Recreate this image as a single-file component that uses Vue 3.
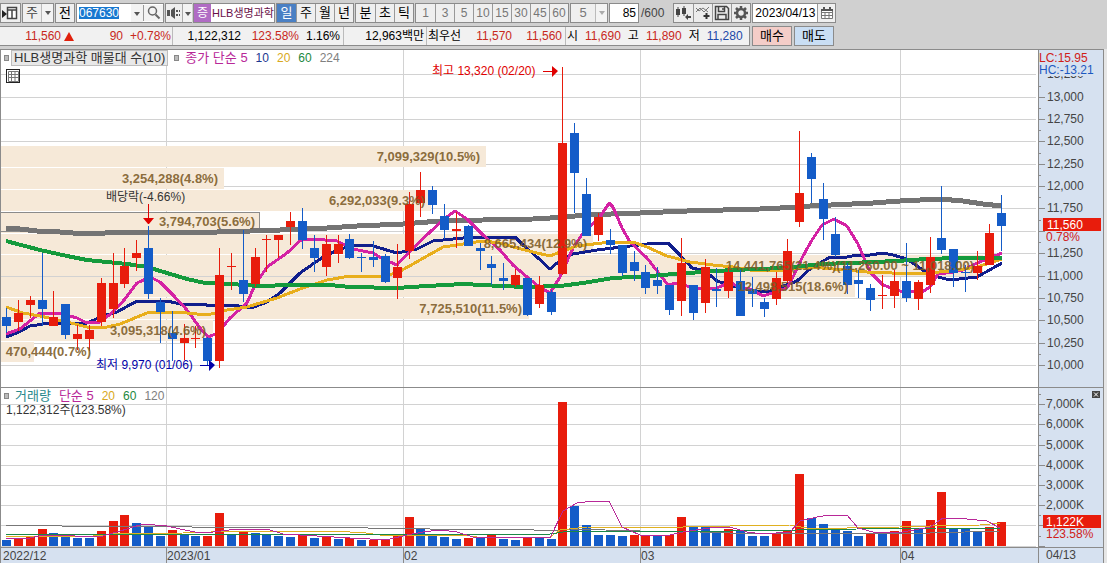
<script setup>
import { computed, onBeforeUnmount, onMounted, ref } from 'vue'

const BASE_WIDTH = 1037
const plot = ref(null)
const width = ref(BASE_WIDTH)
let observer
const measure = () => { if (plot.value) width.value = plot.value.clientWidth || BASE_WIDTH }
onMounted(() => {
  measure()
  observer = new ResizeObserver(measure)
  observer.observe(plot.value)
})
onBeforeUnmount(() => observer && observer.disconnect())

const k = computed(() => width.value / BASE_WIDTH)
const sx = (v) => v * k.value
const line = (pts) => pts.map(([x, y]) => `${sx(x)},${y}`).join(' ')

const periods = ['일', '주', '월', '년']
const units = ['분', '초', '틱']
const steps = ['1', '3', '5', '10', '15', '30', '45', '60']

// kind, high, body top, body bottom, low, volume kind, volume top
const rows = [
  ['d', 308, 317, 326, 333, 'd', 540], ['u', 300, 313, 322, 331, 'u', 539], ['u', 296, 300, 305, 318, 'u', 537],
  ['d', 253, 300, 309, 326, 'u', 529], ['u', 291, 317, 326, 326, 'd', 533], ['d', 304, 304, 335, 339, 'd', 535],
  ['u', 325, 334, 339, 350, 'd', 538], ['u', 325, 330, 339, 351, 'd', 538], ['u', 278, 283, 322, 326, 'u', 531],
  ['u', 253, 283, 309, 318, 'u', 521], ['u', 248, 266, 284, 288, 'u', 515], ['u', 240, 253, 258, 271, 'd', 523],
  ['d', 226, 248, 294, 299, 'd', 527], ['d', 298, 302, 312, 343, 'd', 536], ['d', 311, 333, 339, 361, 'u', 530],
  ['u', 324, 338, 343, 360, 'd', 534], ['u', 326, 338, 339, 348, 'd', 536], ['d', 337, 338, 361, 365, 'u', 536],
  ['u', 248, 275, 361, 368, 'u', 513], ['u', 253, 266, 267, 290, 'd', 534], ['d', 230, 280, 294, 302, 'u', 531],
  ['u', 248, 257, 284, 287, 'd', 533], ['u', 235, 239, 240, 272, 'd', 534], ['u', 235, 235, 240, 258, 'd', 536],
  ['u', 212, 221, 227, 245, 'd', 537], ['d', 208, 221, 240, 249, 'u', 535], ['d', 235, 248, 258, 272, 'd', 538],
  ['u', 235, 244, 267, 276, 'u', 537], ['u', 235, 244, 254, 263, 'd', 539], ['d', 234, 239, 258, 259, 'u', 538],
  ['d', 253, 257, 258, 272, 'd', 540], ['d', 241, 257, 260, 267, 'u', 540], ['d', 254, 256, 282, 283, 'u', 540],
  ['u', 244, 267, 278, 299, 'u', 536], ['u', 192, 204, 251, 259, 'u', 517], ['u', 172, 190, 203, 217, 'd', 529],
  ['d', 186, 190, 205, 214, 'd', 534], ['d', 204, 216, 230, 239, 'd', 537], ['u', 212, 229, 231, 248, 'd', 539],
  ['d', 225, 226, 246, 246, 'u', 538], ['d', 243, 248, 251, 270, 'd', 538], ['d', 256, 264, 268, 285, 'u', 535],
  ['d', 263, 278, 281, 290, 'd', 539], ['u', 269, 275, 285, 287, 'd', 540], ['d', 278, 278, 315, 316, 'u', 538],
  ['u', 276, 285, 304, 308, 'd', 538], ['d', 290, 292, 312, 315, 'd', 539], ['u', 67, 143, 274, 275, 'u', 402],
  ['d', 123, 133, 173, 213, 'd', 506], ['d', 178, 194, 236, 236, 'd', 525], ['u', 213, 217, 235, 241, 'd', 535],
  ['d', 229, 240, 245, 254, 'd', 535], ['d', 245, 245, 273, 276, 'd', 536], ['d', 251, 262, 271, 281, 'u', 535],
  ['d', 265, 272, 288, 294, 'u', 535], ['d', 267, 280, 286, 294, 'd', 535], ['d', 285, 285, 310, 315, 'u', 535],
  ['u', 238, 263, 301, 316, 'u', 517], ['d', 285, 285, 313, 320, 'd', 527], ['u', 259, 267, 303, 313, 'd', 527],
  ['d', 268, 289, 291, 307, 'd', 531], ['u', 267, 272, 291, 298, 'u', 529], ['d', 270, 281, 316, 316, 'd', 531],
  ['d', 277, 289, 294, 307, 'd', 536], ['d', 298, 302, 309, 317, 'd', 536], ['u', 272, 278, 299, 305, 'u', 533],
  ['u', 239, 251, 281, 283, 'u', 531], ['u', 131, 193, 222, 227, 'u', 474], ['d', 153, 157, 179, 203, 'd', 518],
  ['d', 183, 199, 219, 240, 'd', 524], ['d', 217, 234, 255, 257, 'd', 528], ['d', 263, 266, 285, 294, 'd', 531],
  ['d', 270, 280, 284, 298, 'd', 536], ['d', 284, 288, 300, 311, 'u', 533], ['u', 275, 295, 296, 309, 'd', 533],
  ['u', 270, 281, 296, 308, 'u', 531], ['d', 243, 281, 298, 302, 'u', 521], ['u', 280, 282, 299, 310, 'd', 528],
  ['u', 237, 257, 285, 293, 'u', 520], ['d', 186, 238, 250, 254, 'u', 492], ['d', 249, 249, 273, 287, 'd', 528],
  ['d', 265, 272, 273, 292, 'd', 528], ['u', 251, 266, 273, 280, 'd', 532], ['u', 224, 233, 265, 265, 'u', 527],
  ['d', 195, 213, 226, 251, 'u', 522],
]
const bars = computed(() => rows.map(([kind, high, top, bottom, low, vkind, vol], i) => {
  const x = Math.round(sx(6 + i * 11.84))
  return { kind, high, top, bottom, low, vkind, vol, x }
}))

const bands = [
  { y: 146, h: 21, w: 485, text: '7,099,329(10.5%)', end: 480, base: 161 },
  { y: 168, h: 21, w: 223, text: '3,254,288(4.8%)', end: 218, base: 183 },
  { y: 190, h: 21, w: 430, text: '6,292,033(9.3%)', end: 425, base: 205 },
  { y: 212, h: 21, w: 259, text: '3,794,703(5.6%)', end: 255, base: 226 },
  { y: 234, h: 20, w: 592, text: '8,665,434(12.9%)', end: 587, base: 248 },
  { y: 255, h: 21, w: 982, text: '14,441,765(21.4%)(11,260.00 ~ 11,018.00)', end: 974, base: 270 },
  { y: 277, h: 20, w: 854, text: '12,498,515(18.6%)', end: 848, base: 291 },
  { y: 298, h: 21, w: 528, text: '7,725,510(11.5%)', end: 522, base: 313 },
  { y: 320, h: 21, w: 212, text: '3,095,318(4.6%)', end: 206, base: 335 },
  { y: 342, h: 20, w: 33, text: '470,444(0.7%)', end: 91, base: 356 },
]

const averages = [
  { name: 'ma224', pts: [[6, 228], [20, 229], [37, 231], [60, 232], [73, 233], [100, 234], [110, 232], [217, 232], [233, 231], [250, 231], [280, 230], [327, 228], [357, 226], [403, 224], [440, 221], [483, 220], [533, 219], [567, 217], [583, 215], [640, 213], [687, 211], [760, 209], [780, 208], [810, 206], [873, 203], [900, 201], [940, 199], [963, 201], [983, 204], [1002, 206]] },
  { name: 'ma10', pts: [[6, 337], [17, 333], [30, 326], [50, 323], [87, 323], [103, 316], [117, 312], [137, 301], [167, 301], [180, 304], [200, 304], [213, 306], [230, 305], [247, 307], [254, 307], [267, 302], [280, 293], [300, 273], [323, 257], [340, 249], [357, 245], [373, 246], [397, 253], [417, 249], [433, 241], [463, 238], [483, 237], [515, 237], [523, 245], [538, 258], [550, 269], [563, 258], [573, 254], [597, 250], [630, 246], [647, 244], [668, 243], [680, 255], [692, 268], [705, 271], [717, 281], [733, 286], [750, 290], [760, 292], [770, 291], [797, 281], [810, 269], [830, 257], [847, 257], [857, 255], [870, 255], [883, 253], [893, 255], [907, 259], [930, 275], [950, 280], [977, 277], [1002, 263]] },
  { name: 'ma5', pts: [[6, 334], [20, 329], [30, 321], [40, 313], [63, 314], [77, 318], [87, 323], [100, 322], [113, 312], [125, 299], [137, 283], [150, 277], [160, 282], [173, 295], [187, 310], [200, 328], [208, 337], [218, 333], [230, 318], [247, 303], [255, 285], [267, 267], [287, 253], [302, 239], [313, 239], [337, 241], [353, 249], [373, 253], [383, 259], [397, 265], [413, 248], [430, 232], [443, 220], [455, 211], [467, 219], [483, 235], [500, 250], [513, 265], [527, 277], [538, 286], [550, 293], [560, 277], [573, 248], [583, 233], [600, 217], [609, 203], [613, 207], [622, 228], [630, 242], [647, 258], [668, 285], [677, 283], [690, 287], [703, 289], [717, 288], [730, 282], [740, 288], [750, 289], [763, 296], [775, 292], [787, 288], [793, 277], [803, 256], [812, 240], [822, 225], [834, 219], [847, 226], [858, 244], [870, 272], [883, 285], [900, 291], [922, 292], [930, 287], [938, 274], [953, 272], [963, 270], [977, 263], [1002, 253]] },
  { name: 'ma20', pts: [[6, 307], [23, 313], [40, 316], [67, 322], [87, 327], [103, 328], [120, 324], [147, 313], [163, 312], [187, 313], [207, 315], [227, 310], [247, 307], [260, 303], [277, 298], [300, 289], [327, 280], [350, 276], [383, 276], [397, 273], [420, 260], [443, 247], [463, 244], [483, 241], [500, 243], [513, 247], [533, 252], [550, 256], [563, 251], [577, 246], [610, 242], [633, 242], [647, 247], [667, 256], [690, 262], [713, 265], [733, 267], [750, 270], [783, 270], [810, 267], [833, 269], [867, 272], [917, 274], [950, 271], [977, 267], [1002, 259]] },
  { name: 'ma60', pts: [[6, 241], [40, 250], [67, 256], [87, 260], [127, 264], [147, 267], [167, 273], [187, 279], [205, 283], [230, 284], [260, 286], [290, 285], [330, 285], [350, 287], [397, 288], [427, 286], [463, 284], [483, 285], [500, 286], [527, 287], [560, 286], [583, 283], [613, 278], [650, 276], [687, 273], [733, 270], [783, 268], [823, 264], [850, 263], [897, 261], [927, 259], [957, 258], [1002, 258]] },
]

const volumeAverages = [
  { name: 'v120', pts: [[6, 525], [60, 525], [62, 526], [190, 526], [192, 527], [366, 527], [368, 528], [427, 528], [430, 529], [532, 529], [534, 530], [560, 530], [570, 529], [640, 531], [700, 532], [730, 533], [930, 533], [1000, 531]] },
  { name: 'v20', pts: [[6, 537], [93, 536], [113, 534], [183, 533], [240, 531], [333, 531], [366, 533], [380, 535], [463, 535], [477, 537], [550, 537], [560, 530], [587, 527], [673, 528], [693, 526], [730, 526], [790, 525], [807, 528], [847, 528], [900, 527], [930, 526], [980, 525], [1000, 523]] },
  { name: 'v60', pts: [[6, 534], [550, 534], [570, 531], [730, 531], [797, 530], [857, 529], [937, 528], [1000, 529]] },
  { name: 'v5', pts: [[6, 538], [30, 538], [43, 535], [70, 535], [80, 537], [103, 536], [127, 529], [143, 524], [167, 526], [180, 529], [200, 533], [213, 532], [237, 529], [267, 529], [283, 534], [317, 536], [350, 538], [370, 539], [390, 539], [407, 535], [423, 532], [440, 530], [457, 532], [473, 537], [503, 538], [527, 537], [550, 538], [563, 511], [577, 503], [593, 501], [609, 501], [622, 527], [640, 535], [670, 535], [683, 532], [710, 528], [730, 527], [747, 532], [763, 534], [790, 532], [800, 521], [817, 517], [830, 515], [847, 515], [858, 528], [877, 533], [903, 532], [930, 527], [943, 518], [967, 519], [987, 521], [1000, 528]] },
]

const format = (n) => n.toLocaleString('en-US')
const priceY = (p) => Math.round(365 - (p - 10000) * 0.0895)
const prices = Array.from({ length: 14 }, (_, i) => 10000 + i * 250)
const priceMarks = prices.map((p) => ({ y: priceY(p), minor: priceY(p) - 11, label: p === 11500 ? '' : format(p) }))
const volumeMarks = [0, 1, 2, 3, 4, 5, 6, 7].map((n) => {
  const y = Math.round(545.5 - n * 20.2)
  return { y, minor: y - 10, label: n > 1 ? `${n},000K` : '' }
})
const months = [{ x: 1, text: '2022/12' }, { x: 166, text: '2023/01' }, { x: 403, text: '02' }, { x: 640, text: '03' }, { x: 900, text: '04' }]
</script>

<template>
  <main class="app">
    <header class="toolbar">
      <div class="row controls">
        <button class="box icon w21" aria-label="창 목록">
          <svg width="17" height="14" viewBox="0 0 17 14"><path d="M0 4l5 4-5 4z" fill="#222" /><path d="M5.500 1.500h9v11h-9z M5.500 4h9 M10 4v8.500" fill="#fff" stroke="#444" stroke-width="1.500" /></svg>
        </button>
        <div class="box combo w32">
          <select aria-label="종목 구분"><option>주</option></select><span class="drop"></span>
        </div>
        <button class="box w20">전</button>
        <div class="box code">
          <input value="067630" aria-label="종목코드"><button class="drop" aria-label="종목 목록"></button>
          <button class="seg icon" aria-label="검색">
            <svg width="16" height="16" viewBox="0 0 16 16" fill="none" stroke="#666"><circle cx="6.500" cy="6" r="4" stroke-width="1.500" /><path d="M9.500 9.500l4 4" stroke-width="2" /></svg>
          </button>
        </div>
        <div class="box sound">
          <button class="icon" aria-label="소리">
            <svg width="16" height="14" viewBox="0 0 16 14" fill="#555"><path d="M1 4h3v6H1z M5 4l4-3v12l-4-3z M10 4h2v2h-2z M10 8h2v2h-2z M13 4h1v2h-1z M13 8h1v2h-1z" /></svg>
          </button><button class="drop" aria-label="소리 설정"></button>
        </div>
        <div class="box name"><b>증</b><span>HLB생명과학</span></div>
        <div class="group">
          <button v-for="(p, i) in periods" :key="p" class="seg" :class="{ active: i === 0 }">{{ p }}</button>
        </div>
        <div class="group">
          <button v-for="u in units" :key="u" class="seg">{{ u }}</button>
        </div>
        <div class="group">
          <button v-for="s in steps" :key="s" class="seg muted">{{ s }}</button>
        </div>
        <div class="box combo w38 off">
          <select aria-label="분 간격"><option>5</option></select><span class="drop"></span>
        </div>
        <div class="count"><input class="box" value="85" aria-label="봉 개수"><span>/600</span></div>
        <div class="group tools">
          <button class="seg icon" aria-label="차트 종류">
            <svg width="17" height="16" viewBox="0 0 17 16" fill="#444"><path d="M1 4h4v6H1z M2.500 2h1v10h-1z M7 3h4v6H7z M8.500 1h1v10h-1z M10 12l3-3v2h3v2h-3v2z" /></svg>
          </button>
          <button class="seg icon" aria-label="지표 추가">
            <svg width="17" height="16" viewBox="0 0 17 16" fill="none"><path d="M1 7l4-4 4 4 5-5M1 3l3 3 4-3 5 4" stroke="#777" /><path d="M11.500 8v6M8.500 11h6" stroke="#333" stroke-width="2" /></svg>
          </button>
          <button class="seg icon" aria-label="저장">
            <svg width="16" height="16" viewBox="0 0 16 16" fill="none" stroke="#444" stroke-width="1.500"><path d="M1.500 1.500h11l2 2v11h-13z M4.500 1.500v5h6v-5 M4 14.500V9.500h8v5" /><path d="M9 3v2" /></svg>
          </button>
          <button class="seg icon" aria-label="설정">
            <svg width="16" height="16" viewBox="0 0 16 16" fill="none" stroke="#555"><circle cx="8" cy="8" r="4" stroke-width="2.500" /><path d="M8 1v2M8 13v2M1 8h2M13 8h2M3 3l2 2M11 11l2 2M3 13l2-2M11 5l2-2" stroke-width="2.500" /></svg>
          </button>
        </div>
        <div class="box date">
          <input value="2023/04/13" aria-label="날짜"><button class="seg icon" aria-label="달력">
            <svg width="12" height="12" viewBox="0 0 12 12"><path d="M.5 2.500h11v9H.5z M.5 5.500h11 M.5 8.500h11 M4 5v6.500 M8 5v6.500" fill="#fff" stroke="#777" /><path d="M0 2h12v2H0z M2 0h2v2H2z M8 0h2v2H8z" fill="#555" /></svg>
          </button>
        </div>
      </div>

      <div class="row quotes">
        <div class="panel">
          <div class="cell c1 red"><span class="n61">11,560</span><i class="up"></i><span class="n48">90</span><span class="n48">+0.78%</span></div>
          <div class="cell c2"><span class="n68">1,122,312</span><span class="n58 red">123.58%</span><span class="n41">1.16%</span></div>
          <div class="cell c3"><span>12,963백만</span></div>
          <div class="cell c4"><span class="label">최우선</span><span class="n48 red">11,570</span><span class="n50 red">11,560</span></div>
          <div class="cell c5">
            <span>시</span><span class="red">11,690</span><span>고</span><span class="red">11,890</span><span>저</span><span class="blue">11,280</span>
          </div>
        </div>
        <button class="trade buy">매수</button>
        <button class="trade sell">매도</button>
      </div>
    </header>

    <section class="chart">
      <div ref="plot" class="pane price">
        <svg class="canvas" :viewBox="`1 50 ${width} 337`" aria-label="가격 차트">
          <g class="grid">
            <line v-for="m in priceMarks" :key="m.y" x1="1" :x2="width - 1" :y1="m.y" :y2="m.y" />
          </g>
          <g class="grid"><line v-for="m in months.slice(1)" :key="m.x" :x1="sx(m.x)" :x2="sx(m.x)" y1="50" y2="387" /></g>
          <g class="bands">
            <rect v-for="b in bands" :key="b.y" x="1" :y="b.y" :width="sx(b.w)" :height="b.h" />
          </g>
          <rect class="focus" x="0" y="212" :width="sx(259)" height="19" />
          <g class="averages">
            <polyline v-for="a in averages" :key="a.name" :class="a.name" :points="line(a.pts)" />
          </g>
          <g v-for="(b, i) in bars" :key="i" :class="b.kind">
            <rect :x="b.x" :y="b.high" width="1" :height="b.low - b.high" />
            <rect :x="b.x - 4" :y="b.top" width="9" :height="b.bottom - b.top" />
          </g>
          <g class="bandtext">
            <text v-for="b in bands" :key="b.text" :x="sx(b.end)" :y="b.base">{{ b.text }}</text>
          </g>
          <text class="note" :x="sx(106)" y="201">배당락(-4.66%)</text>
          <g class="hi">
            <path :transform="`translate(${sx(148)} 0)`" d="M0 204h1v14h5l-5 6h-1l-5-6h5z" />
            <text :x="sx(562) - 130" y="75">최고 13,320 (02/20)</text>
            <path :transform="`translate(${sx(562)} 0)`" d="M-19 71h9v-5l6 5-6 6v-5h-9z" />
          </g>
          <g class="lo">
            <text :x="sx(219) - 123" y="369">최저 9,970 (01/06)</text>
            <path :transform="`translate(${sx(219)} 0)`" d="M-19 365h9v-5l6 5-6 6v-5h-9z" />
          </g>
        </svg>
        <div class="legend">
          <i class="dot"></i><span class="title">HLB생명과학 매물대 수(10)</span><i class="dot"></i>
          <span class="lead c5ma">종가 단순 5</span><span class="num c10ma">10</span><span class="num c20ma">20</span><span class="num c60ma">60</span><span class="num gray">224</span>
        </div>
        <button class="table icon" aria-label="표 보기">
          <svg width="11" height="11" viewBox="0 0 11 11" fill="#fff" stroke="#777"><path d="M.5 .5h10v10H.5z M.5 3.500h10 M.5 6.500h10 M3.500 .5v10 M7 .5v10" /></svg>
        </button>
      </div>

      <svg class="axis" viewBox="1039 50 64 337" aria-label="가격 축">
        <g class="ticks">
          <path v-for="m in priceMarks" :key="m.y" :d="`M1039 ${m.y}h6v1h-6z M1039 ${m.minor}h2v1h-2z`" />
        </g>
        <text v-for="m in priceMarks" :key="m.y" x="1047" :y="m.y + 4">{{ m.label }}</text>
        <rect class="cover" x="1039" y="50" width="65" height="26" />
        <text class="red" x="1039" y="62">LC:15.95</text>
        <text class="blue" x="1039" y="74">HC:-13.21</text>
        <rect class="tag" x="1043" y="218" width="58" height="13" />
        <text class="white" x="1047" y="229">11,560</text>
        <text class="red" x="1046" y="241">0.78%</text>
      </svg>

      <div class="pane volume">
        <svg class="canvas" :viewBox="`1 388 ${width} 159`" aria-label="거래량 차트">
          <g class="grid">
            <line v-for="m in volumeMarks" :key="m.y" x1="1" :x2="width - 1" :y1="m.y" :y2="m.y" />
            <line v-for="m in months.slice(1)" :key="m.x" :x1="sx(m.x)" :x2="sx(m.x)" y1="388" y2="547" />
          </g>
          <rect v-for="(b, i) in bars" :key="i" :class="b.vkind" :x="b.x - 4" :y="b.vol" width="9" :height="546 - b.vol" />
          <g class="averages thin">
            <polyline v-for="a in volumeAverages" :key="a.name" :class="a.name" :points="line(a.pts)" />
          </g>
        </svg>
        <div class="legend">
          <i class="dot"></i><span class="lead teal">거래량</span><span class="c5ma">단순 5</span><span class="num c20ma">20</span><span class="num c60ma">60</span><span class="num gray">120</span>
        </div>
        <div class="amount">1,122,312주(123.58%)</div>
      </div>

      <div class="axisbox">
        <svg class="axis" viewBox="1039 388 64 159" aria-label="거래량 축">
          <g class="ticks">
            <path v-for="m in volumeMarks" :key="m.y" :d="`M1039 ${m.y}h6v1h-6z M1039 ${m.minor}h2v1h-2z`" />
          </g>
          <text v-for="m in volumeMarks" :key="m.y" x="1046" :y="m.y + 4">{{ m.label }}</text>
          <rect class="tag" x="1043" y="515" width="58" height="13" />
          <text class="white" x="1046" y="526">1,122K</text>
          <text class="red" x="1046" y="538">123.58%</text>
        </svg>
        <button class="close icon" aria-label="닫기">
          <svg width="8" height="7" viewBox="0 0 8 7"><path d="M2 1.500l4 4M6 1.500l-4 4" stroke="#fff" /></svg>
        </button>
      </div>

      <svg class="dates" :viewBox="`1 548 ${width} 15`" aria-label="날짜 축">
        <g v-for="(m, i) in months" :key="m.x">
          <rect v-if="i" class="mark" :x="sx(m.x)" y="548" width="1" height="15" />
          <text :x="sx(m.x) + (i ? 1 : 2)" y="560">{{ m.text }}</text>
        </g>
      </svg>
      <div class="today">04/13</div>
    </section>
  </main>
</template>

<style>
body { margin: 0; background: #e6e6e6; }
</style>

<style scoped>
.app { min-height: 100vh; overflow: hidden; background: #e6e6e6; color: #000; font: 12px/14px "Liberation Sans", "Noto Sans CJK KR", sans-serif; white-space: nowrap; }
* { box-sizing: border-box; }
button, input, select { margin: 0; padding: 0; font: inherit; color: inherit; border: 0; border-radius: 0; background: none; outline: none; appearance: none; }
.toolbar { display: flex; flex-direction: column; gap: 3px; height: 49px; padding-top: 3px; background: #d0d0d0; }
.row { display: flex; height: 20px; }
.controls { gap: 1px; font-size: 13px; }
.box, .group { display: flex; flex: none; align-items: center; height: 20px; border: 1px solid #8b8b8b; background: #efefef; }
.icon { display: flex; align-items: center; justify-content: center; }
button.box { justify-content: center; }
.w20 { width: 20px; }
.w21 { width: 21px; }
.w32 { width: 32px; }
.w38 { width: 38px; }
.combo select { flex: 1; min-width: 0; height: 18px; color: #444; text-align: center; text-align-last: center; }
.combo .drop { border-left: 1px solid #bbb; }
.off select { color: #777; }
.off .drop::after { border-top-color: #aaa; }
.drop { position: relative; flex: none; width: 12px; height: 18px; background: #f3f3f3; }
.drop::after { content: ""; display: block; width: 0; margin: 1px auto 0; border: 3px solid transparent; border-top: 4px solid #555; border-bottom: 0; }
.combo .drop::after { margin-top: 7px; }
.code { width: 88px; background: #fff; }
.code input { flex: 1; min-width: 0; height: 18px; padding-left: 2px; color: #fff; font-size: 12px; background: linear-gradient(#1878d0, #1878d0) 2px 3px / 40px 12px no-repeat; }
.code .seg { width: 20px; border-left: 1px solid #999; background: #f3f3f3; }
.sound { width: 27px; }
.sound .icon { flex: 1; height: 18px; border-right: 1px solid #aaa; }
.sound .drop { width: 9px; }
.name { width: 82px; color: #6a1048; font-size: 11px; background: #fff; }
.name b { flex: none; width: 17px; height: 18px; margin-right: 1px; font-size: 12px; font-weight: 400; line-height: 18px; color: #fff; text-align: center; background: #b06cc4; }
.group .seg { width: 19px; height: 18px; border-left: 1px solid #999; }
.group .seg:first-child { border-left: 0; }
.group .active { color: #fff; background: #4a80c4; }
.muted { color: #777; font-size: 12px; }
.count { display: flex; align-items: center; gap: 2px; margin-right: 8px; color: #444; font-size: 12px; }
.count input { width: 30px; padding-right: 2px; color: #000; text-align: right; background: #fff; }
.tools { background: #ececec; }
.date { width: 84px; background: #fff; font-size: 12px; }
.date input { flex: 1; min-width: 0; height: 18px; padding-left: 2px; }
.date .seg { width: 18px; height: 18px; border-left: 1px solid #999; background: #f0f0f0; }
.quotes { gap: 2px; }
.panel { display: flex; width: 750px; border: 1px solid #8b8b8b; border-left: 0; background: #f1f1f1; }
.cell { display: flex; align-items: center; border-right: 1px solid #bbb; text-align: right; }
.cell:last-child { border-right: 0; }
.cell span { flex: none; }
.c1 { width: 173px; }
.c2 { width: 171px; }
.c3 { width: 83px; justify-content: flex-end; padding-right: 2px; }
.c4 { width: 139px; }
.c5 { flex: 1; gap: 7px; padding-left: 1px; }
.label { width: 36px; text-align: left; margin-left: 1px; }
.n61 { width: 61px; }
.n48 { width: 48px; }
.n50 { width: 50px; }
.n68 { width: 68px; }
.n58 { width: 58px; }
.n41 { width: 41px; }
.up { flex: none; width: 0; margin-left: 3px; margin-right: 1px; border: 5px solid transparent; border-bottom: 9px solid #e0200c; border-top: 0; }
.red { color: #c8281c; }
.blue { color: #1c48a8; }
.trade { width: 40px; border: 1px solid #8b8b8b; font-size: 13px; }
.buy { background: #f4cdc8; }
.sell { background: #c9def4; }

.chart { display: grid; grid-template-columns: minmax(0, 1fr) 65px; grid-template-rows: 338px 160px 15px; margin-right: 3px; border: solid #8b8b8b; border-width: 1px 1px 0 1px; }
.pane { position: relative; background: #fff; }
.price, .chart > .axis { border-bottom: 1px solid #8b8b8b; }
.volume, .axisbox { border-bottom: 1px solid #8b8b8b; }
.canvas, .axis, .dates { display: block; width: 100%; height: 100%; }
svg text { font-size: 12px; }
.axis, .axisbox, .today { background: #d6e1f0; }
.chart > .axis, .axisbox, .today { border-left: 1px solid #8b8b8b; }
.axis text { fill: #444; }
.axis text.red { fill: #d02018; }
.axis text.blue { fill: #1c58c0; }
.axis text.white { fill: #fff; }
.cover { fill: #d6e1f0; }
.tag { fill: #e81c0c; }
.ticks { fill: #8b8b8b; }
.grid { stroke: #d2d2d2; shape-rendering: crispEdges; }
.bands { fill: #f6e9d8; shape-rendering: crispEdges; }
.focus { fill: none; stroke: #8b8b8b; shape-rendering: crispEdges; }
.averages { fill: none; stroke-width: 3; stroke-linejoin: round; shape-rendering: crispEdges; }
.averages.thin { stroke-width: 1; }
.ma224 { stroke: #747474; stroke-width: 5; }
.ma60 { stroke: #149a3c; stroke-width: 4; }
.ma20 { stroke: #e8ae1c; }
.ma10 { stroke: #101e8c; }
.ma5 { stroke: #d422a4; }
.v120 { stroke: #777; }
.v60 { stroke: #1c8848; }
.v20 { stroke: #e0b020; }
.v5 { stroke: #b82898; }
.u { fill: #e81c0c; }
.d { fill: #145cc8; }
svg .bandtext text { font: 700 13px "Liberation Sans", sans-serif; fill: #7d5c28; fill-opacity: .9; text-anchor: end; }
.note { fill: #333; }
.hi { fill: #e00000; }
.lo { fill: #0000a8; }
.legend { position: absolute; top: 0; left: 3px; display: flex; align-items: center; gap: 8px; font-size: 13px; line-height: 16px; }
.dot { width: 5px; height: 6px; margin-right: -6px; border: 1px solid #888; background: #bbb; }
.title { padding: 0 2px; margin-right: -2px; line-height: 14px; border: 1px solid #bdbdbd; background: #e8e8e8; color: #333; }
.lead { margin-left: 4px; }
.num { font-size: 12px; }
.c5ma { color: #b82898; }
.c10ma { color: #1c3890; }
.c20ma { color: #d8a820; }
.c60ma { color: #1c8840; }
.gray { color: #808080; }
.teal { color: #28888c; }
.table { position: absolute; top: 19px; left: 5px; width: 14px; height: 14px; border: 1px solid #222; background: #fff; }
.amount { position: absolute; top: 15px; left: 5px; color: #333; }
.axisbox { position: relative; }
.close { position: absolute; top: 3px; right: 3px; width: 8px; height: 7px; background: #444; }
.dates { background: #d6e1f0; }
.dates text { fill: #444; }
.mark { fill: #8b8b8b; }
.today { padding-left: 7px; line-height: 15px; color: #444; }
</style>
